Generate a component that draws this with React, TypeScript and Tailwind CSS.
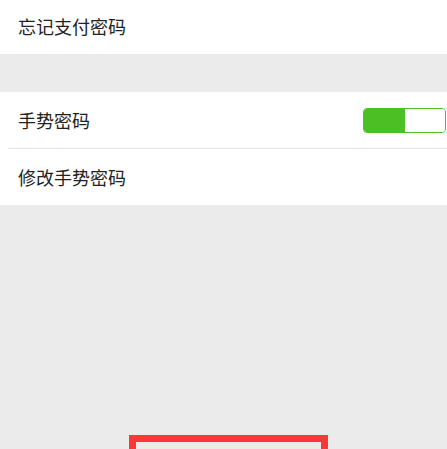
import React from 'react';

const Row: React.FC<{ label: string; children?: React.ReactNode; className?: string }> = ({ label, children, className = '' }) => (
  <div className={`flex items-center justify-between bg-white pl-[18px] pr-[1px] ${className}`}>
    <span className="text-[18px] text-[#222] leading-none">{label}</span>
    {children}
  </div>
);

export default function App() {
  const on = true;
  return (
    <div
      className="h-[449px] w-[447px] overflow-hidden bg-[#ebebeb]"
      style={{ fontFamily: '"Noto Sans CJK SC", "Noto Sans", sans-serif' }}
    >
      {/* Top group */}
      <Row label="忘记支付密码" className="h-[54px] pb-[2px]" />

      {/* Gesture group */}
      <div className="mt-[38px] bg-white">
        <Row label="手势密码" className="h-[56px]">
          <div className={`flex h-[25px] w-[83px] overflow-hidden rounded-[4px] border-[1.5px] border-[#4cbf25] ${on ? '' : ''}`}>
            <div className="w-[41px] bg-[#4cbf25]" />
            <div className="flex-1 bg-white" />
          </div>
        </Row>
        <div className="ml-[8px] h-px bg-[#e6e6e6]" />
        <Row label="修改手势密码" className="h-[56px]" />
      </div>

      {/* Highlight box */}
      <div className="ml-[129px] mt-[230px] h-[40px] w-[199px] border-[7px] border-[#fb3838]" />
    </div>
  );
}
